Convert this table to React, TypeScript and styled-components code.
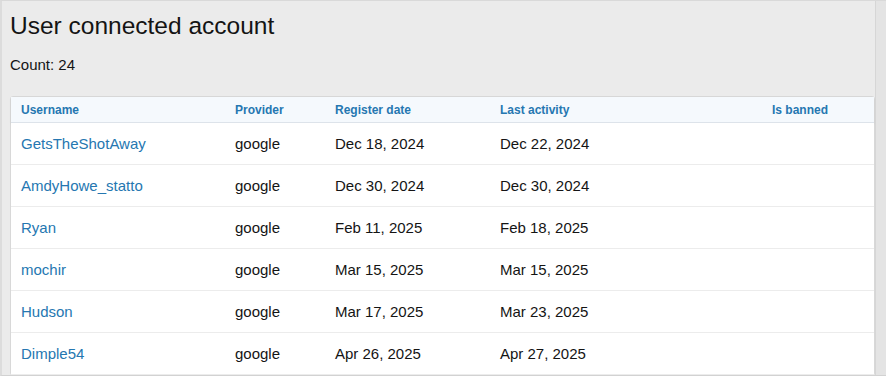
import React from "react";
import styled, { createGlobalStyle } from "styled-components";

const GlobalStyle = createGlobalStyle`
  html, body {
    margin: 0;
    padding: 0;
    background: #e4e4e4;
    font-family: "Liberation Sans", Arial, sans-serif;
  }
`;

const Frame = styled.div`
  display: flex;
  height: 376px;
  box-sizing: border-box;
  border-top: 1px solid #d9d9d9;
  border-bottom: 1px solid #d2d2d2;
  border-left: 2px solid #dcdcdc;
  overflow: hidden;
`;

const Page = styled.div`
  width: 874px;
  flex: none;
  box-sizing: border-box;
  background: #ebebeb;
  border-right: 1px solid #d6d6d6;
  padding: 10px 0 0 8px;
`;

const Title = styled.h1`
  margin: 0;
  font-size: 24.5px;
  line-height: 30px;
  font-weight: 400;
  color: #141414;
`;

const Count = styled.div`
  margin-top: 14px;
  font-size: 15px;
  line-height: 20px;
  color: #141414;
`;

const Table = styled.div`
  margin-top: 21px;
  background: #fff;
  border: 1px solid #d8d8d8;
  border-radius: 3px;
`;

const Row = styled.div<{ $head?: boolean }>`
  display: grid;
  grid-template-columns: 224px 100px 165px 272px 1fr;
  align-items: center;
  height: ${(p) => (p.$head ? "26px" : "42px")};
  background: ${(p) => (p.$head ? "#f5f9fd" : "#fff")};
  border-bottom: ${(p) => (p.$head ? "1px solid #dde3ea" : "1px solid #ececec")};
  box-shadow: ${(p) => (p.$head ? "0 1px 2px rgba(0,0,0,0.06)" : "none")};
  font-size: ${(p) => (p.$head ? "12px" : "15px")};
  font-weight: ${(p) => (p.$head ? 700 : 400)};
  color: ${(p) => (p.$head ? "#2577b1" : "#141414")};
  box-sizing: border-box;

  & > :first-child {
    padding-left: 10px;
  }
`;

const Cell = styled.div`
  white-space: nowrap;
`;

const UserLink = styled.a`
  color: #2577b1;
  text-decoration: none;
`;

const Side = styled.div`
  flex: 1;
  background: #e4e4e4;
`;

const accounts = [
  { name: "GetsTheShotAway", provider: "google", registered: "Dec 18, 2024", last: "Dec 22, 2024" },
  { name: "AmdyHowe_statto", provider: "google", registered: "Dec 30, 2024", last: "Dec 30, 2024" },
  { name: "Ryan", provider: "google", registered: "Feb 11, 2025", last: "Feb 18, 2025" },
  { name: "mochir", provider: "google", registered: "Mar 15, 2025", last: "Mar 15, 2025" },
  { name: "Hudson", provider: "google", registered: "Mar 17, 2025", last: "Mar 23, 2025" },
  { name: "Dimple54", provider: "google", registered: "Apr 26, 2025", last: "Apr 27, 2025" },
];

export default function App() {
  return (
    <>
      <GlobalStyle />
      <Frame>
        <Page>
          <Title>User connected account</Title>
          <Count>Count: 24</Count>
          <Table>
            <Row $head>
              <Cell>Username</Cell>
              <Cell>Provider</Cell>
              <Cell>Register date</Cell>
              <Cell>Last activity</Cell>
              <Cell>Is banned</Cell>
            </Row>
            {accounts.map((a) => (
              <Row key={a.name}>
                <Cell>
                  <UserLink href="#">{a.name}</UserLink>
                </Cell>
                <Cell>{a.provider}</Cell>
                <Cell>{a.registered}</Cell>
                <Cell>{a.last}</Cell>
                <Cell />
              </Row>
            ))}
          </Table>
        </Page>
        <Side />
      </Frame>
    </>
  );
}
